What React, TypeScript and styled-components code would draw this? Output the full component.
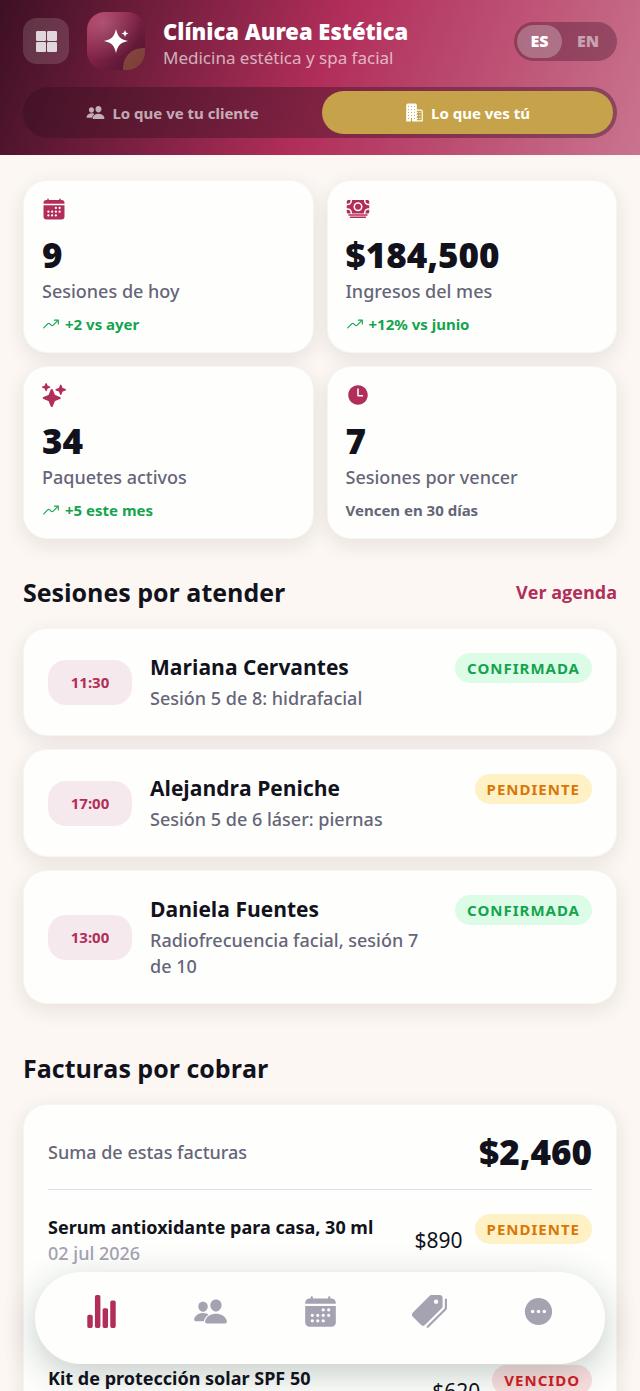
import React from 'react';
import styled, { createGlobalStyle } from 'styled-components';
import {
  IoBusiness,
  IoCalendar,
  IoCash,
  IoPeople,
  IoPricetags,
  IoSparkles,
  IoStatsChart,
  IoTime,
  IoTrendingUp,
} from 'react-icons/io5';

const color = {
  brand: '#b12e5a',
  ink: '#12121c',
  muted: '#666578',
  faint: '#a5a2b2',
  card: '#fefffd',
  gold: '#c6a24a',
  green: '#14a44d',
};

const headingFont = "'Open Sans', 'Noto Sans', sans-serif";

const GlobalStyle = createGlobalStyle`
  *, *::before, *::after { box-sizing: border-box; }
  body {
    margin: 0;
    background: #fcf7f3;
    color: ${color.ink};
    font-family: 'Noto Sans', 'Open Sans', sans-serif;
  }
  h1, h2, h3, p, ul { margin: 0; padding: 0; }
  ul { list-style: none; }
  button { font: inherit; border: 0; padding: 0; cursor: pointer; }
`;

const Shell = styled.div`
  display: flex;
  flex-direction: column;
  height: 100vh;
`;

const Header = styled.header`
  flex: none;
  display: flex;
  flex-direction: column;
  gap: 17px;
  padding: 12px 23px 17px;
  background: linear-gradient(110deg, #3d1024 0%, #b12e5a 50%, #c9748f 100%);
`;

const TopBar = styled.div`
  display: flex;
  align-items: center;
  gap: 18px;
`;

const MenuButton = styled.button`
  display: grid;
  place-items: center;
  width: 46px;
  height: 46px;
  border-radius: 14px;
  background: rgba(255, 255, 255, 0.14);
  color: rgba(255, 255, 255, 0.8);
  svg { width: 21px; height: 21px; }
`;

const Logo = styled.svg`
  flex: none;
  width: 58px;
  height: 58px;
  border-radius: 18px;
`;

const Identity = styled.div`
  flex: 1;
  min-width: 0;
  padding-top: 3px;
`;

const ClinicName = styled.h1`
  color: #fff;
  font-size: 22px;
  font-weight: 900;
  line-height: 30px;
`;

const Tagline = styled.p`
  color: rgba(255, 255, 255, 0.65);
  font-size: 17px;
  font-weight: 400;
  line-height: 24px;
`;

const Languages = styled.div`
  display: flex;
  padding: 3px;
  border-radius: 20px;
  background: rgba(61, 16, 36, 0.35);
`;

const LanguageButton = styled.button<{ $active?: boolean }>`
  height: 33px;
  padding: 0 12px;
  min-width: 45px;
  border-radius: 17px;
  background: ${(p) => (p.$active ? 'rgba(255, 255, 255, 0.26)' : 'transparent')};
  color: ${(p) => (p.$active ? '#fff' : 'rgba(255, 255, 255, 0.5)')};
  font-size: 16px;
  font-weight: 900;
  & + & { min-width: 52px; }
`;

const Views = styled.div`
  display: flex;
  gap: 4px;
  padding: 4px;
  border-radius: 26px;
  background: rgba(50, 14, 30, 0.4);
`;

const ViewButton = styled.button<{ $active?: boolean }>`
  flex: 1;
  display: flex;
  align-items: center;
  justify-content: center;
  gap: 7px;
  height: 43px;
  border-radius: 22px;
  background: ${(p) => (p.$active ? color.gold : 'transparent')};
  color: ${(p) => (p.$active ? '#fff' : 'rgba(255, 255, 255, 0.65)')};
  font-size: 15px;
  font-weight: 700;
  svg { font-size: 19px; }
`;

const Main = styled.main`
  flex: 1;
  min-height: 0;
  overflow-y: auto;
  scrollbar-width: none;
  padding: 25px 23px 140px;
`;

const Card = styled.article`
  border: 1px solid rgba(60, 30, 40, 0.04);
  border-radius: 24px;
  background: ${color.card};
  box-shadow: 0 6px 20px rgba(60, 30, 40, 0.1);
`;

const StatGrid = styled.div`
  display: grid;
  grid-template-columns: 1fr 1fr;
  gap: 13px;
`;

const StatCard = styled(Card)`
  padding: 16px 18px 17px;
`;

const StatIcon = styled.div`
  height: 24px;
  color: ${color.brand};
  font-size: 24px;
  line-height: 0;
`;

const StatValue = styled.p`
  margin-top: 12px;
  font-size: 35px;
  font-weight: 900;
  line-height: 44px;
`;

const StatLabel = styled.p`
  margin-top: 1px;
  color: ${color.muted};
  font-size: 18px;
  font-weight: 500;
  line-height: 26px;
`;

const StatNote = styled.p<{ $up?: boolean }>`
  display: flex;
  align-items: center;
  gap: 5px;
  margin-top: 9px;
  color: ${(p) => (p.$up ? color.green : color.muted)};
  font-size: 15px;
  font-weight: 700;
  line-height: 22px;
  svg { font-size: 18px; }
`;

const SectionHead = styled.div`
  display: flex;
  align-items: center;
  justify-content: space-between;
  padding: 35px 0 18px;
`;

const SectionTitle = styled.h2`
  font-family: ${headingFont};
  font-size: 25px;
  font-weight: 700;
  line-height: 36px;
`;

const AgendaLink = styled.a`
  color: ${color.brand};
  font-family: ${headingFont};
  font-size: 18px;
  font-weight: 700;
  text-decoration: none;
`;

const SessionList = styled.ul`
  display: flex;
  flex-direction: column;
  gap: 13px;
  padding-bottom: 11px;
`;

const SessionCard = styled(Card).attrs({ as: 'li' })`
  display: flex;
  align-items: center;
  gap: 18px;
  padding: 24px;
`;

const Time = styled.time`
  flex: none;
  width: 84px;
  border-radius: 18px;
  background: #f6e9ed;
  color: ${color.brand};
  font-size: 15px;
  font-weight: 700;
  line-height: 45px;
  text-align: center;
`;

const Info = styled.div`
  flex: 1;
  min-width: 0;
`;

const ClientName = styled.h3`
  font-family: ${headingFont};
  font-size: 21px;
  font-weight: 700;
  line-height: 28px;
`;

const Detail = styled.p`
  margin-top: 4px;
  color: ${color.muted};
  font-size: 18px;
  font-weight: 500;
  line-height: 26px;
`;

const badgeTones = {
  ok: ['#dcfce7', '#14a44d'],
  warn: ['#fef1c6', '#d97706'],
  late: ['#fbdfe0', '#d42024'],
};

const Badge = styled.span<{ $tone: keyof typeof badgeTones }>`
  flex: none;
  align-self: flex-start;
  padding: 0 12px;
  border-radius: 15px;
  background: ${(p) => badgeTones[p.$tone][0]};
  color: ${(p) => badgeTones[p.$tone][1]};
  font-size: 15px;
  font-weight: 700;
  letter-spacing: 1px;
  line-height: 30px;
  text-transform: uppercase;
`;

const InvoiceCard = styled(Card)`
  padding: 24px;
`;

const TotalRow = styled.div`
  display: flex;
  align-items: center;
  justify-content: space-between;
  padding-bottom: 15px;
  border-bottom: 1px solid #dfdfee;
`;

const TotalLabel = styled.p`
  color: ${color.muted};
  font-size: 18px;
  font-weight: 500;
`;

const TotalValue = styled.p`
  font-size: 35px;
  font-weight: 900;
  line-height: 45px;
`;

const InvoiceRow = styled.li`
  display: flex;
  align-items: center;
  gap: 12px;
  padding: 24px 0 74px;
  & + & { border-top: 1px solid #dfdfee; }
`;

const InvoiceTitle = styled.h3`
  font-size: 18px;
  font-weight: 700;
  line-height: 26px;
`;

const InvoiceDate = styled.p`
  min-height: 26px;
  color: ${color.faint};
  font-size: 18px;
  font-weight: 500;
  line-height: 26px;
`;

const Amount = styled.p`
  font-size: 21px;
  line-height: 30px;
`;

const TabBar = styled.nav`
  position: fixed;
  right: 35px;
  bottom: 27px;
  left: 35px;
  display: flex;
  padding: 0 12px;
  border-radius: 46px;
  background: ${color.card};
  box-shadow: 0 10px 36px rgba(15, 40, 35, 0.24);
`;

const Tab = styled.button<{ $active?: boolean }>`
  flex: 1;
  display: flex;
  justify-content: center;
  height: 92px;
  padding-top: 22px;
  background: transparent;
  color: ${(p) => (p.$active ? color.brand : color.faint)};
  font-size: 35px;
`;

function GridIcon() {
  return (
    <svg viewBox="0 0 21 21" fill="currentColor" aria-hidden="true">
      <rect width="10" height="10" rx="1.2" />
      <rect x="11" width="10" height="10" rx="1.2" />
      <rect y="11" width="10" height="10" rx="1.2" />
      <rect x="11" y="11" width="10" height="10" rx="1.2" />
    </svg>
  );
}

function MoreIcon() {
  return (
    <svg width="1em" height="1em" viewBox="0 0 36 36" aria-hidden="true">
      <circle cx="18" cy="18" r="14" fill="currentColor" />
      <g fill={color.card}>
        <circle cx="12" cy="18" r="1.8" />
        <circle cx="18" cy="18" r="1.8" />
        <circle cx="24" cy="18" r="1.8" />
      </g>
    </svg>
  );
}

const stats = [
  { icon: IoCalendar, value: '9', label: 'Sesiones de hoy', note: '+2 vs ayer', up: true },
  { icon: IoCash, value: '$184,500', label: 'Ingresos del mes', note: '+12% vs junio', up: true },
  { icon: IoSparkles, value: '34', label: 'Paquetes activos', note: '+5 este mes', up: true },
  { icon: IoTime, value: '7', label: 'Sesiones por vencer', note: 'Vencen en 30 días', up: false },
];

const sessions = [
  { time: '11:30', name: 'Mariana Cervantes', detail: 'Sesión 5 de 8: hidrafacial', tone: 'ok', status: 'Confirmada' },
  { time: '17:00', name: 'Alejandra Peniche', detail: 'Sesión 5 de 6 láser: piernas', tone: 'warn', status: 'Pendiente' },
  { time: '13:00', name: 'Daniela Fuentes', detail: 'Radiofrecuencia facial, sesión 7 de 10', tone: 'ok', status: 'Confirmada' },
] as const;

const invoices = [
  { title: 'Serum antioxidante para casa, 30 ml', date: '02 jul 2026', amount: '$890', tone: 'warn', status: 'Pendiente' },
  { title: 'Kit de protección solar SPF 50', date: '', amount: '$620', tone: 'late', status: 'Vencido' },
] as const;

const tabs = [
  { icon: IoStatsChart, label: 'Resumen' },
  { icon: IoPeople, label: 'Clientes' },
  { icon: IoCalendar, label: 'Agenda' },
  { icon: IoPricetags, label: 'Precios' },
  { icon: MoreIcon, label: 'Más' },
];

function ClinicLogo() {
  return (
    <Logo viewBox="0 0 58 58" aria-hidden="true">
      <defs>
        <linearGradient id="logoBase" x1="0" y1="0" x2="1" y2="1">
          <stop offset="0" stopColor="#b12e5a" />
          <stop offset="0.8" stopColor="#5a1734" />
          <stop offset="1" stopColor="#4c142d" />
        </linearGradient>
        <radialGradient id="logoGlow" cx="0.28" cy="0.2" r="0.65">
          <stop offset="0" stopColor="#fff" stopOpacity="0.2" />
          <stop offset="1" stopColor="#fff" stopOpacity="0" />
        </radialGradient>
      </defs>
      <rect width="58" height="58" fill="url(#logoBase)" />
      <rect width="58" height="58" fill="url(#logoGlow)" />
      <circle cx="56" cy="56" r="20" fill="#c08a4a" fillOpacity="0.38" />
      <path
        d="M29 17 C31 25 33 27 41 29 C33 31 31 33 29 41 C27 33 25 31 17 29 C25 27 27 25 29 17Z"
        fill="#fff"
      />
      <path d="M38 18 L39 20.500 L41.500 21.500 L39 22.500 L38 25 L37 22.500 L34.500 21.500 L37 20.500Z" fill="#fff" />
    </Logo>
  );
}

export default function App() {
  return (
    <Shell>
      <GlobalStyle />
      <Header>
        <TopBar>
          <MenuButton aria-label="Menú">
            <GridIcon />
          </MenuButton>
          <ClinicLogo />
          <Identity>
            <ClinicName>Clínica Aurea Estética</ClinicName>
            <Tagline>Medicina estética y spa facial</Tagline>
          </Identity>
          <Languages>
            <LanguageButton $active aria-pressed="true">ES</LanguageButton>
            <LanguageButton aria-pressed="false">EN</LanguageButton>
          </Languages>
        </TopBar>
        <Views>
          <ViewButton aria-pressed="false">
            <IoPeople />
            Lo que ve tu cliente
          </ViewButton>
          <ViewButton $active aria-pressed="true">
            <IoBusiness />
            Lo que ves tú
          </ViewButton>
        </Views>
      </Header>

      <Main>
        <StatGrid>
          {stats.map(({ icon: Icon, value, label, note, up }) => (
            <StatCard key={label}>
              <StatIcon>
                <Icon />
              </StatIcon>
              <StatValue>{value}</StatValue>
              <StatLabel>{label}</StatLabel>
              <StatNote $up={up}>
                {up && <IoTrendingUp />}
                {note}
              </StatNote>
            </StatCard>
          ))}
        </StatGrid>

        <SectionHead>
          <SectionTitle>Sesiones por atender</SectionTitle>
          <AgendaLink href="#agenda">Ver agenda</AgendaLink>
        </SectionHead>
        <SessionList>
          {sessions.map((s) => (
            <SessionCard key={s.time}>
              <Time>{s.time}</Time>
              <Info>
                <ClientName>{s.name}</ClientName>
                <Detail>{s.detail}</Detail>
              </Info>
              <Badge $tone={s.tone}>{s.status}</Badge>
            </SessionCard>
          ))}
        </SessionList>

        <SectionHead>
          <SectionTitle>Facturas por cobrar</SectionTitle>
        </SectionHead>
        <InvoiceCard>
          <TotalRow>
            <TotalLabel>Suma de estas facturas</TotalLabel>
            <TotalValue>$2,460</TotalValue>
          </TotalRow>
          <ul>
            {invoices.map((inv) => (
              <InvoiceRow key={inv.title}>
                <Info>
                  <InvoiceTitle>{inv.title}</InvoiceTitle>
                  <InvoiceDate>{inv.date}</InvoiceDate>
                </Info>
                <Amount>{inv.amount}</Amount>
                <Badge $tone={inv.tone}>{inv.status}</Badge>
              </InvoiceRow>
            ))}
          </ul>
        </InvoiceCard>
      </Main>

      <TabBar aria-label="Secciones">
        {tabs.map(({ icon: Icon, label }, i) => (
          <Tab key={label} $active={i === 0} aria-label={label}>
            <Icon />
          </Tab>
        ))}
      </TabBar>
    </Shell>
  );
}
